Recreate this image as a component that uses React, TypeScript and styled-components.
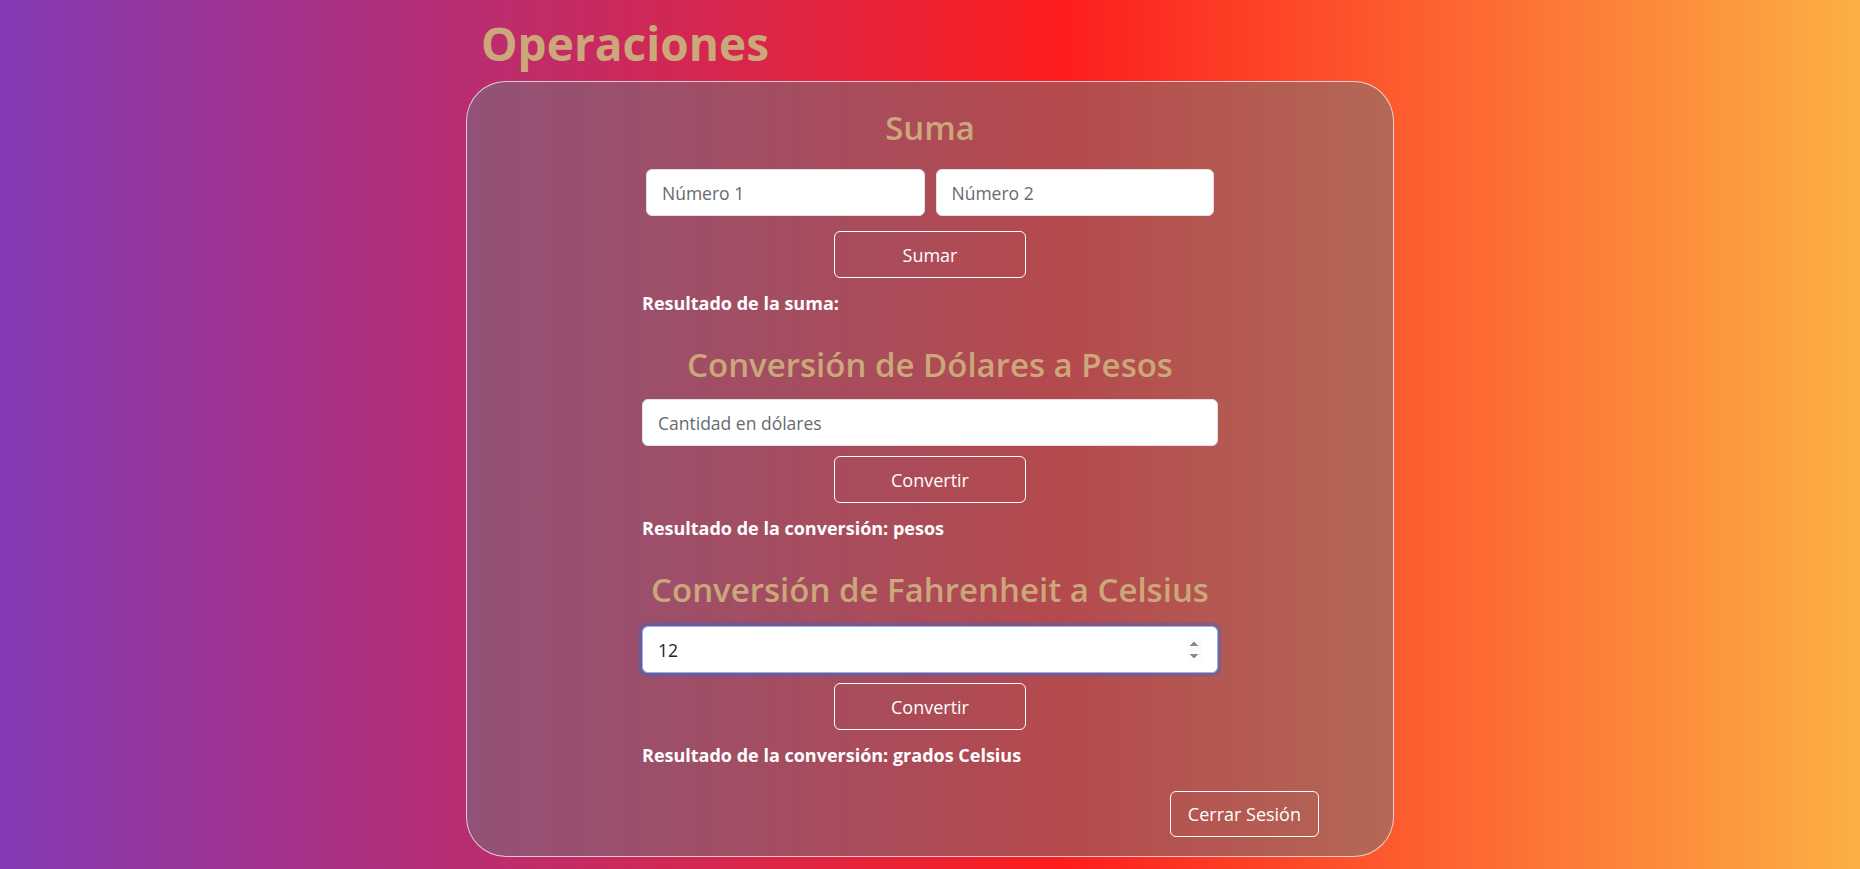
import React, { useState } from 'react';
import styled, { createGlobalStyle } from 'styled-components';

const GlobalStyle = createGlobalStyle`
  * {
    box-sizing: border-box;
  }
  html, body {
    margin: 0;
    padding: 0;
  }
  body {
    min-height: 100vh;
    font-family: 'Open Sans', 'Noto Sans', sans-serif;
    font-size: 18px;
    line-height: 1.5;
    color: #212529;
    background: linear-gradient(90deg, #833ab4 0%, #fd1d1d 57%, #fcb045 100%);
  }
`;

export default function App() {
  const [num1, setNum1] = useState('');
  const [num2, setNum2] = useState('');
  const [dolares, setDolares] = useState('');
  const [fahrenheit, setFahrenheit] = useState('12');

  return (
    <>
      <GlobalStyle />
      <Page>
        <Title>Operaciones</Title>
        <Card>
          <Form>
            <Section>
              <Heading $gap={21}>Suma</Heading>
              <InputRow>
                <Input
                  type="number"
                  placeholder="Número 1"
                  value={num1}
                  onChange={e => setNum1(e.target.value)}
                />
                <Input
                  type="number"
                  placeholder="Número 2"
                  value={num2}
                  onChange={e => setNum2(e.target.value)}
                />
              </InputRow>
              <OutlineBtn $gap={15}>Sumar</OutlineBtn>
              <Result>Resultado de la suma: </Result>
            </Section>

            <Section>
              <Heading $gap={14}>Conversión de Dólares a Pesos</Heading>
              <Input
                type="number"
                placeholder="Cantidad en dólares"
                value={dolares}
                onChange={e => setDolares(e.target.value)}
              />
              <OutlineBtn>Convertir</OutlineBtn>
              <Result>Resultado de la conversión: pesos</Result>
            </Section>

            <Section>
              <Heading $gap={16}>Conversión de Fahrenheit a Celsius</Heading>
              <Input
                type="number"
                autoFocus
                $focused
                value={fahrenheit}
                onChange={e => setFahrenheit(e.target.value)}
              />
              <OutlineBtn>Convertir</OutlineBtn>
              <Result>Resultado de la conversión: grados Celsius</Result>
            </Section>
          </Form>
          <Footer>
            <LogoutBtn>Cerrar Sesión</LogoutBtn>
          </Footer>
        </Card>
      </Page>
    </>
  );
}

const Page = styled.div`
  width: 928px;
  margin: 0 auto;
  padding-top: 14px;
`;

const Title = styled.h1`
  margin: 0 0 9px 15px;
  font-size: 46px;
  line-height: 58px;
  font-weight: 700;
  color: #cba77a;
`;

const Card = styled.div`
  height: 776px;
  padding: 26px 74px 0;
  border: 1px solid rgba(255, 255, 255, 0.7);
  border-radius: 40px;
  background: rgba(108, 117, 125, 0.5);
`;

const Form = styled.div`
  width: 576px;
  margin: 0 auto;
`;

const Section = styled.div`
  display: flex;
  flex-direction: column;
  align-items: center;
  margin-bottom: 28px;
`;

const Heading = styled.h2<{ $gap: number }>`
  margin: 0 0 ${({ $gap }) => $gap}px;
  font-size: 33px;
  line-height: 40px;
  font-weight: 600;
  color: #cba77a;
  text-align: center;
`;

const InputRow = styled.div`
  display: grid;
  grid-template-columns: 1fr 1fr;
  gap: 11px;
  width: 100%;
  padding: 0 4px;
`;

const Input = styled.input<{ $focused?: boolean }>`
  display: block;
  width: 100%;
  height: 47px;
  padding: 0 15px;
  font-family: inherit;
  font-size: 17.5px;
  color: #212529;
  background: #fff;
  border: 1px solid ${({ $focused }) => ($focused ? '#86b7fe' : '#dee2e6')};
  border-radius: 6px;
  outline: none;
  box-shadow: ${({ $focused }) =>
    $focused ? '0 0 0 4px rgba(13, 110, 253, 0.25)' : 'none'};

  &::placeholder {
    color: #646b72;
  }

  &:focus {
    border-color: #86b7fe;
    box-shadow: 0 0 0 4px rgba(13, 110, 253, 0.25);
  }
`;

const OutlineBtn = styled.button<{ $gap?: number }>`
  width: 192px;
  height: 47px;
  margin-top: ${({ $gap = 10 }) => $gap}px;
  font-family: inherit;
  font-size: 18px;
  color: #fff;
  background: transparent;
  border: 1px solid #fff;
  border-radius: 6px;
  cursor: pointer;
`;

const Result = styled.p`
  align-self: flex-start;
  margin: 12px 0 0;
  font-size: 18px;
  line-height: 27px;
  font-weight: 700;
  color: #fff;
`;

const Footer = styled.div`
  display: flex;
  justify-content: flex-end;
  margin-top: -6px;
`;

const LogoutBtn = styled.button`
  height: 46px;
  padding: 0 17px;
  font-family: inherit;
  font-size: 18px;
  color: #fff;
  background: transparent;
  border: 1px solid #fff;
  border-radius: 6px;
  cursor: pointer;
`;
